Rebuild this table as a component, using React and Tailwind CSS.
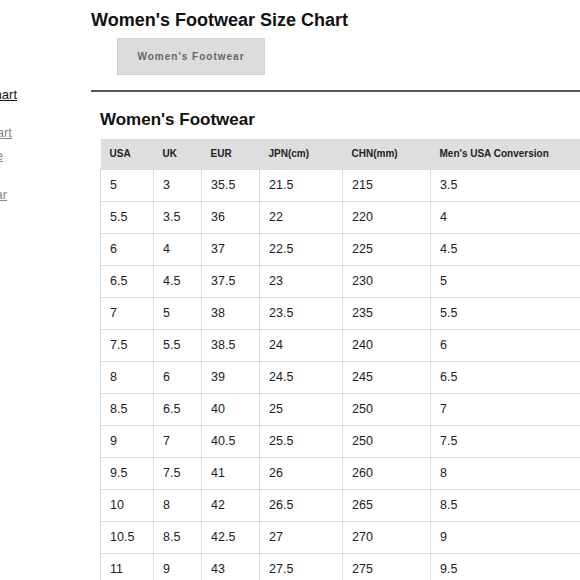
const headers = ['USA', 'UK', 'EUR', 'JPN(cm)', 'CHN(mm)', "Men's USA Conversion"]

const rows = [
  ['5', '3', '35.5', '21.5', '215', '3.5'],
  ['5.5', '3.5', '36', '22', '220', '4'],
  ['6', '4', '37', '22.5', '225', '4.5'],
  ['6.5', '4.5', '37.5', '23', '230', '5'],
  ['7', '5', '38', '23.5', '235', '5.5'],
  ['7.5', '5.5', '38.5', '24', '240', '6'],
  ['8', '6', '39', '24.5', '245', '6.5'],
  ['8.5', '6.5', '40', '25', '250', '7'],
  ['9', '7', '40.5', '25.5', '250', '7.5'],
  ['9.5', '7.5', '41', '26', '260', '8'],
  ['10', '8', '42', '26.5', '265', '8.5'],
  ['10.5', '8.5', '42.5', '27', '270', '9'],
  ['11', '9', '43', '27.5', '275', '9.5'],
]

const colWidths = ['w-[53px]', 'w-[48px]', 'w-[58px]', 'w-[83px]', 'w-[88px]', 'w-[200px]']

export default function App() {
  return (
    <div className="w-[580px] h-[580px] overflow-hidden bg-white flex font-['Liberation_Sans',sans-serif]">
      {/* sidebar, mostly scrolled off to the left */}
      <div className="w-[91px] shrink-0 pt-[86px]">
        <div className="w-[17px] flex flex-col items-end text-[13px] whitespace-nowrap">
          <a className="text-[#111] underline leading-[18px]">Footwear Size Chart</a>
          <a className="mt-[20px] mr-[5px] text-[#888] underline leading-[18px]">Apparel Size Chart</a>
          <a className="mt-[5px] mr-[14px] text-[#888] underline leading-[18px]">Sock Size Guide</a>
          <a className="mt-[21px] mr-[10px] text-[#888] underline leading-[18px]">Kids Footwear</a>
        </div>
      </div>

      <div className="flex-1 min-w-0">
        <h1 className="mt-[9px] text-[18px] font-bold leading-[22px] text-[#111]">Women's Footwear Size Chart</h1>
        <div className="mt-[7px] ml-[26px] w-[148px] h-[37px] bg-[#dcdcdc] border border-[#d2d2d2] flex items-center justify-center">
          <span className="text-[10px] font-bold tracking-[1px] text-[#666]">Women's Footwear</span>
        </div>
        <div className="mt-[15px] h-[2px] w-[600px] bg-[#555]" />

        <div className="pl-[9px]">
          <h2 className="mt-[17px] text-[17px] font-bold leading-[22px] text-[#111]">Women's Footwear</h2>
          <table className="mt-[8px] w-[530px] table-fixed border-collapse text-[#222]">
            <thead>
              <tr className="bg-[#dedede] h-[30px]">
                {headers.map((h, i) => (
                  <th key={h} className={`${colWidths[i]} text-left pl-[9px] text-[10px] font-bold whitespace-nowrap`}>{h}</th>
                ))}
              </tr>
            </thead>
            <tbody>
              {rows.map((r, ri) => (
                <tr key={ri} className="h-[32px]">
                  {r.map((c, ci) => (
                    <td key={ci} className="border border-[#dcdcdc] pl-[9px] text-[12.5px]">{c}</td>
                  ))}
                </tr>
              ))}
            </tbody>
          </table>
        </div>
      </div>
    </div>
  )
}
